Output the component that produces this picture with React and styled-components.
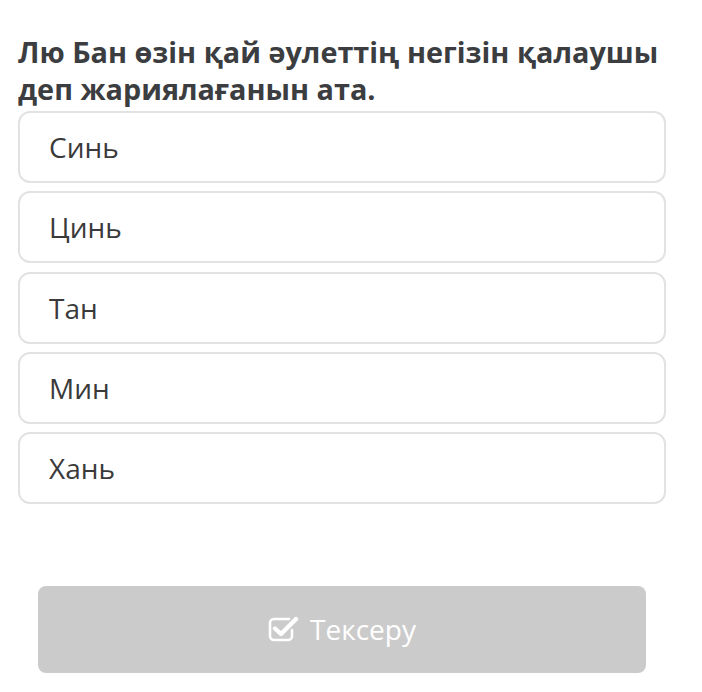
import React from "react";
import styled, { createGlobalStyle } from "styled-components";

const Global = createGlobalStyle`
  html, body { margin: 0; padding: 0; background: #ffffff; }
  body { font-family: "Open Sans", "Noto Sans", sans-serif; }
`;

const Page = styled.div`
  width: 702px;
  height: 692px;
  box-sizing: border-box;
  padding: 33px 36px 0 18px;
  display: flex;
  flex-direction: column;
`;

const Question = styled.h1`
  margin: 0 0 4px 0;
  font-size: 28.8px;
  line-height: 37px;
  font-weight: 700;
  color: #3b3d40;
  letter-spacing: 0;
`;

const Options = styled.div`
  display: flex;
  flex-direction: column;
  gap: 8.3px;
`;

const Option = styled.div`
  height: 72px;
  box-sizing: border-box;
  border: 2px solid #e1e3e3;
  border-radius: 12px;
  display: flex;
  align-items: center;
  padding-left: 29px;
  font-size: 28px;
  color: #3a3a3a;
  background: #fff;
`;

const Footer = styled.div`
  margin-top: 82px;
  padding: 0 20px;
`;

const CheckButton = styled.button`
  width: 608px;
  height: 87px;
  border: none;
  border-radius: 8px;
  background: #cbcbcb;
  color: #ffffff;
  font-family: "Open Sans", "Noto Sans", sans-serif;
  font-size: 28px;
  display: flex;
  align-items: center;
  justify-content: center;
  gap: 10px;
  padding: 0 0 2px 0;
  cursor: default;
`;

const CheckIcon = () => (
  <svg width="32" height="26" viewBox="0 0 32 26" aria-hidden="true">
    <path
      d="M21 3 H6 a4 4 0 0 0 -4 4 V20 a4 4 0 0 0 4 4 H20 a4 4 0 0 0 4 -4 V14"
      fill="none"
      stroke="#fff"
      strokeWidth="2.6"
      strokeLinecap="round"
    />
    <path
      d="M7 12.5 L13 18 L28 3"
      fill="none"
      stroke="#fff"
      strokeWidth="4.4"
      strokeLinecap="round"
      strokeLinejoin="round"
    />
  </svg>
);

const answers = ["Синь", "Цинь", "Тан", "Мин", "Хань"];

export default function App() {
  return (
    <>
      <Global />
      <Page>
        <Question>
          Лю Бан өзін қай әулеттің негізін қалаушы деп жариялағанын ата.
        </Question>
        <Options>
          {answers.map((a) => (
            <Option key={a}>{a}</Option>
          ))}
        </Options>
        <Footer>
          <CheckButton>
            <CheckIcon />
            <span>Тексеру</span>
          </CheckButton>
        </Footer>
      </Page>
    </>
  );
}
